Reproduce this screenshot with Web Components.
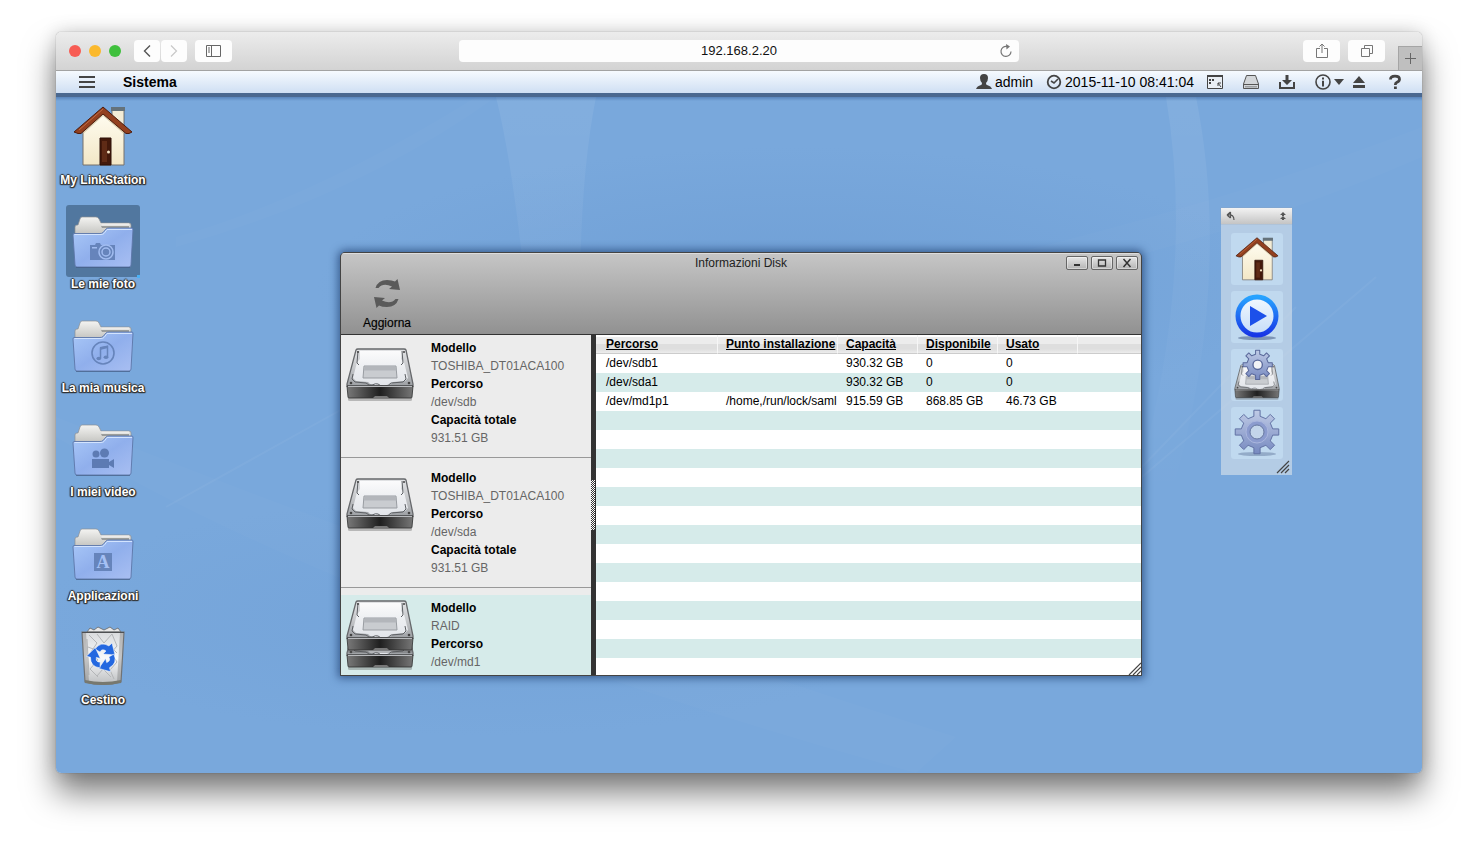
<!DOCTYPE html>
<html lang="it">
<head>
<meta charset="utf-8">
<title>LinkStation</title>
<style>
  html, body { margin: 0; }
  body {
    min-height: 100vh; box-sizing: border-box; padding: 32px 56px 80px;
    display: flex; flex-direction: column;
    background: #fff; color: #000;
    font: 12px/18px "Liberation Sans", Arial, sans-serif;
  }
</style>
</head>
<body>
<browser-frame address="192.168.2.20">
  <system-bar slot="bar"></system-bar>
  <nas-desktop>
    <desktop-icon slot="icons" icon="house" label="My LinkStation"></desktop-icon>
    <desktop-icon slot="icons" icon="photo" label="Le mie foto" selected></desktop-icon>
    <desktop-icon slot="icons" icon="music" label="La mia musica"></desktop-icon>
    <desktop-icon slot="icons" icon="video" label="I miei video"></desktop-icon>
    <desktop-icon slot="icons" icon="apps" label="Applicazioni"></desktop-icon>
    <desktop-icon slot="icons" icon="trash" label="Cestino"></desktop-icon>
    <app-window heading="Informazioni Disk">
      <disk-item slot="list" model="TOSHIBA_DT01ACA100" path="/dev/sdb" total="931.51 GB"></disk-item>
      <disk-item slot="list" model="TOSHIBA_DT01ACA100" path="/dev/sda" total="931.51 GB"></disk-item>
      <disk-item slot="list" model="RAID" path="/dev/md1" icon="raid" selected></disk-item>
      <partition-table></partition-table>
    </app-window>
    <quick-dock></quick-dock>
  </nas-desktop>
</browser-frame>

<script>
const gear = (cx, cy, n, ro, ri) => {
  const pts = [];
  for (let i = 0; i < n; i++) {
    const a = (i / n) * Math.PI * 2 - Math.PI / 2, s = Math.PI / n;
    for (const [r, o] of [[ri, -0.5], [ro, -0.36], [ro, 0.36], [ri, 0.5]]) {
      pts.push((cx + r * Math.cos(a + o * s)).toFixed(2) + ' ' + (cy + r * Math.sin(a + o * s)).toFixed(2));
    }
  }
  return 'M' + pts.join('L') + 'Z';
};

const grad = (id, ...stops) => `<linearGradient id="${id}" x1="0" y1="0" x2="0" y2="1">` +
  stops.map((c, i) => `<stop offset="${i / (stops.length - 1)}" stop-color="${c}"/>`).join('') + '</linearGradient>';

const folder = glyph => [62, 54, `<defs>${grad('tab', '#f4f4f2', '#bdbdb9')}
  <linearGradient id="front" x1="0" y1="0" x2="1" y2="1"><stop offset="0" stop-color="#a9c8f8"/><stop offset=".5" stop-color="#90afec"/><stop offset="1" stop-color="#a9bff2"/></linearGradient></defs>
  <path d="M3 22V13q0-2 2-2h1l2-6q.5-2 2-2h14q2 0 3 2l2 4h28q2 0 2 2v12H3z" fill="url(#tab)" stroke="#8c8f93" stroke-width=".7"/>
  <path d="M29 12h28v2H30z" fill="#9b9d9b"/><path d="M29 9.500h28v2H30z" fill="#ececea"/>
  <path d="M1 21q0-1.500 1-1.500h26q2 0 3-1l3-3.500q1-1 3-1h23q1 0 1 1.500L59 51q0 2-2 2H5q-2 0-2-2z" fill="url(#front)" stroke="#5c76a8" stroke-width=".9"/>
  <path d="M2.500 20.500H29q2 0 3-1l3-4h25" fill="none" stroke="#d3e4ff" stroke-width="1"/>
  <path d="M4 53.500h54" stroke="#41597f" stroke-width="1" opacity=".6"/><g transform="translate(0 1)">${glyph}</g>`];

const disk = dy => `<g transform="translate(0 ${dy})">
  <path d="M2 50h64v2q0 1-2 1H4q-2 0-2-1z" fill="#555" opacity=".35"/>
  <path d="M10 2q.5-1 2-1h46q1.500 0 2 1l7 34v2H1v-2z" fill="url(#case)" stroke="#66686b" stroke-width="1.300"/>
  <path d="M14 3h42l-1 8 3 3 4 16-3 3-12 1q-2 3-5 3H27q-3 0-5-3l-12-1-3-3 4-16 3-3z" fill="url(#plate)"/>
  <path d="M12 3l-1 12 2 2M7 26l-1 5 3 3 11 1q3 3 6 2 4-2 6-1 2 2 6 2 5 0 7-3l12-1 3-3-1-5M56 3l1 12-2 2" fill="none" stroke="#5d6064" stroke-width="1"/>
  <path d="M18 18h32l1 12H17z" fill="#c9ccd0" stroke="#999da2" stroke-width="1"/>
  <path d="M18.500 18.500h31l1 4H18z" fill="#b3b6bb"/>
  <circle cx="12" cy="4" r="1" fill="#444"/><circle cx="58" cy="4" r="1" fill="#444"/><circle cx="5" cy="35" r="1.300" fill="#444"/><circle cx="63" cy="35" r="1.300" fill="#444"/>
  <path d="M1 38h66l-1 11q0 1-1 1H3q-1 0-1-1z" fill="url(#edge)" stroke="#2d2e2f" stroke-width=".8"/>
  <path d="M2 38.500h64" stroke="#b8babd" stroke-width="1"/>
  <path d="M27 50l2-2h12l2 2z" fill="#777"/></g>`;
const diskDefs = `<defs>${grad('case', '#e2e3e5', '#c7c9cc', '#9da0a4')}${grad('plate', '#fbfbfc', '#eceef1', '#e2e5ea')}
  <linearGradient id="edge" x1="0" y1="0" x2="1" y2="0"><stop offset="0" stop-color="#7a7a7a"/><stop offset=".5" stop-color="#1f1f1f"/><stop offset="1" stop-color="#777"/></linearGradient></defs>`;
const gearDefs = `<defs><linearGradient id="gear" x1="0" y1="0" x2="0" y2="1"><stop offset="0" stop-color="#c0cbe6"/><stop offset="1" stop-color="#7689c0"/></linearGradient></defs>`;

const dark = '#444';
const arrow = 'M2.500 9Q5 1 14 1q5 0 8 1.500L24.500 0 27 11 16 10l3-2.500q-9-4-13.500 1.500z';
const recycle = 'M22 22q6-8 14-3l3-3 3 12-12-1 3-3q-4-3-6 1z';
const ICONS = {
  house: [60, 62, `<defs>${grad('wall', '#fffdf2', '#f3e7c6')}</defs>
    <path d="M39 2h12v20l-12-8z" fill="#f3ecd6" stroke="#555" stroke-width=".8"/><path d="M38 1h14v4H38z" fill="#65727a"/>
    <path d="M10 22L30 5l21 17v37H10z" fill="url(#wall)" stroke="#76706a" stroke-width="1"/>
    <path d="M10 24L30 7l21 17v4L30 10 10 28z" fill="#cdbd9a" opacity=".7"/>
    <path d="M30 1l29 25-3 1.500h-3L30 8 8 27.500H5L1 26z" fill="#93401f" stroke="#4d1c0d" stroke-width="1"/>
    <path d="M30 3L6 24" stroke="#c06b43" stroke-width="1"/>
    <path d="M27 32h11v27H27z" fill="#43190b" stroke="#2c1008"/><path d="M29 35h5v21h-5z" fill="#5f2b16"/><circle cx="35.500" cy="46" r="1.500" fill="#f7e8c8"/>`],
  photo: folder('<path d="M18 30h5l1-2h4l1 2h14v15H18z" fill="#6684bb"/><circle cx="34" cy="37" r="7" fill="#6684bb" stroke="#a1bcf0" stroke-width="1.500"/><circle cx="34" cy="37" r="4" fill="none" stroke="#a1bcf0" stroke-width="1.500"/><path d="M20 32h5v1.500h-5z" fill="#a1bcf0"/>'),
  music: folder('<g fill="none" stroke="#6684bb"><circle cx="31" cy="34" r="11" stroke-width="1.600"/><path d="M28.500 39V29l7-1.500V38" stroke-width="1.500"/></g><path d="M28 28l8-1.500v2.500L28 31z" fill="#6684bb"/><ellipse cx="26.800" cy="39.500" rx="2.400" ry="1.800" fill="#6684bb"/><ellipse cx="34" cy="38.300" rx="2.400" ry="1.800" fill="#6684bb"/>'),
  video: folder('<g fill="#5d7bb3"><circle cx="24" cy="31" r="3.500"/><circle cx="32.500" cy="30" r="4.500"/><path d="M20 36h17v3l5-3v9l-5-3v3H20z"/></g>'),
  apps: folder('<path d="M22 26h18v18H22z" fill="#6684bb"/><text x="31" y="41" text-anchor="middle" font-family="Liberation Serif, serif" font-size="18" font-weight="bold" fill="#a5c0f4">A</text>'),
  trash: [60, 60, `<defs>${grad('bin', '#d9dbdd', '#f8f9fa', '#bcbec0')}</defs>
    <path d="M14 5l3-4 4 2 4-3 6 3 6-3 4 3 4-2 3 4z" fill="#e8e8e8" stroke="#666" stroke-width=".8"/>
    <path d="M9 5h42l-3 50q-18 5-36 0z" fill="url(#bin)" stroke="#6f7275" stroke-width="1.200"/>
    <path d="M16 8l8 8-6 9 7 8-8 9 8 8M24 7l7 9 8-9 5 12-6 7 6 9-7 8 4 9M15 20l8 3M36 18l8 8M24 49l6-7 8 8M14 12l2 36" fill="none" stroke="#b4b6b8" stroke-width="1"/>
    <path d="M9 5h4l3 50h-4zM47 5h4l-3 50h-4z" fill="#777" opacity=".4"/>
    <path d="M12 53q18 4 36 0v3q-18 4-36 0z" fill="#77786f"/><path d="M9 5.500h42" stroke="#4e5052" stroke-width="1.200"/>
    <g fill="#2468e0" stroke="#fff" stroke-width=".5">${[0, 120, 240].map(a => `<path d="${recycle}" transform="rotate(${a} 30 30)"/>`).join('')}</g>`],
  disk: [68, 54, diskDefs + disk(0)],
  raid: [68, 70, diskDefs + disk(17) + disk(0)],
  diskgear: [68, 76, diskDefs + gearDefs + disk(21) + `<path d="${gear(35, 22, 8, 22, 16)}" fill="url(#gear)" stroke="#59689a" stroke-width="1.500" stroke-linejoin="round"/><circle cx="35" cy="22" r="7" fill="#f2f3f6" stroke="#59689a" stroke-width="2"/>`],
  gear: [46, 48, gearDefs + `<ellipse cx="23" cy="45" rx="19" ry="2" fill="#50678e" opacity=".4"/><path d="${gear(23, 23, 8, 22, 16)}" fill="url(#gear)" stroke="#6272a4" stroke-width="1" stroke-linejoin="round"/><circle cx="23" cy="23" r="11" fill="#8b9bce" stroke="#aab6de"/><circle cx="23" cy="23" r="7" fill="#c3d5ea" stroke="#66769f"/>`],
  play: [46, 48, `<defs>${grad('ring', '#27a3ff', '#1736e6')}${grad('disc', '#f2f9ff', '#c5dcf8')}</defs><ellipse cx="23" cy="45" rx="19" ry="2" fill="#50678e" opacity=".6"/><circle cx="23" cy="23" r="19" fill="url(#disc)" stroke="url(#ring)" stroke-width="5"/><path d="M16 13l17 10-17 10z" fill="#1c50ea"/>`],
  refresh: [28, 30, `<g fill="#5a5a5a"><path d="${arrow}"/><path d="${arrow}" transform="rotate(180 14 14.500)"/></g>`],
  user: [16, 16, `<path d="M8 0q4 0 4 4 0 3-2 5 0 2 1 2 4 1 5 4H0q1-3 5-4 1 0 1-2-2-2-2-5 0-4 4-4z" fill="${dark}"/>`],
  clock: [16, 16, `<circle cx="8" cy="8" r="6.300" fill="none" stroke="${dark}" stroke-width="1.800"/><path d="M5 7l3 2 4-4" fill="none" stroke="${dark}" stroke-width="1.600"/>`],
  widget: [16, 14, `<path d="M.5.5h15v13H.5z" fill="#e9eef4" stroke="${dark}"/><path d="M0 0h16v2H0z" fill="${dark}"/><path d="M2 4h2v2H2zM5 4h2v2H5zM2 7h2v2H2z" fill="${dark}"/><path d="M11 8v3M11 8h3M11 8l3 4" stroke="${dark}" stroke-width="1"/>`],
  drive: [16, 14, `<path d="M3.500.5h9L15.500 9v4.500H.5V9z" fill="#d3d6d9" stroke="#555"/><path d="M1 9.500h14" stroke="#555"/><path d="M2 11h12v1.500H2z" fill="#9da0a3"/>`],
  download: [16, 14, `<path d="M6.500 0h3v5H13L8 10 3 5h3.500z" fill="${dark}"/><path d="M1 7v6h14V7" fill="none" stroke="${dark}" stroke-width="2"/>`],
  info: [16, 16, `<circle cx="8" cy="8" r="7" fill="none" stroke="${dark}" stroke-width="1.600"/><path d="M7 3.500h2v2H7zM7 6.800h2V12.500H7z" fill="${dark}"/>`],
  caret: [10, 6, `<path d="M0 0h10L5 6z" fill="${dark}"/>`],
  eject: [12, 12, `<path d="M6 0l6 7H0zM0 9h12v3H0z" fill="${dark}"/>`],
  help: [12, 14, `<path d="M1.500 4.500Q1.500 1.200 6 1.200t4.500 3Q10.500 6 8 7.200 6.300 8 6.300 10" fill="none" stroke="${dark}" stroke-width="2.800"/><path d="M5 11.500h2.800V14H5z" fill="${dark}"/>`],
  menu: [16, 12, `<path d="M0 1h16M0 6h16M0 11h16" stroke="${dark}" stroke-width="2"/>`],
  back: [8, 12, `<path d="M7 .5L1.500 6 7 11.500" fill="none" stroke="#555" stroke-width="1.400"/>`],
  fwd: [8, 12, `<path d="M1 .5L6.500 6 1 11.500" fill="none" stroke="#c8c8c8" stroke-width="1.200"/>`],
  sidebar: [15, 12, `<path d="M.5.5h14v11H.5zM5.500.5v11M2 3h2M2 5h2M2 7h2" fill="none" stroke="#666"/>`],
  reload: [12, 14, `<path d="M7 2.500A5 5 0 1 0 11 7.500" fill="none" stroke="#777" stroke-width="1.200"/><path d="M6 0l4 2.500L6.500 5.500z" fill="#777"/>`],
  share: [12, 16, `<path d="M4 5.500H.5v9h11v-9H8M6 10V1M3.500 3.500L6 1l2.500 2.500" fill="none" stroke="#777"/>`],
  tabs: [12, 12, `<path d="M.5 3.500h8v8h-8zM3.500 3V.5h8v8H9" fill="none" stroke="#777"/>`],
  plus: [11, 11, `<path d="M5.500 0v11M0 5.500h11" stroke="#666"/>`],
  undo: [8, 8, `<path d="M3.500 0v6M0 3l3.500-3M0 3l3.500 3M1 3q6-1 6 5" fill="none" stroke="#555" stroke-width="1.200"/>`],
  up2: [6, 8, `<path d="M3 0l3 3H0zM2 3h2v1H2zM3 4l3 3H0zM2 7h2v1H2z" fill="#555"/>`],
  min: [10, 8, `<path d="M2 6h6" stroke="#333" stroke-width="2"/>`],
  max: [10, 8, `<path d="M1.500 1h7v6h-7z" fill="none" stroke="#333" stroke-width="1.300"/>`],
  close: [10, 8, `<path d="M1.500 0l7 8M8.500 0l-7 8" stroke="#333" stroke-width="1.500"/>`],
  grip: [12, 12, `<path d="M0 12L12 0M4 12l8-8M8 12l4-4" stroke="#444" stroke-width="1.200"/>`],
};

class Base extends HTMLElement {
  connectedCallback() {
    if (this.shadowRoot) return;
    this.attachShadow({ mode: 'open' }).innerHTML = `<style>
      button { all: unset; box-sizing: border-box; cursor: default; }
      button:focus-visible { outline: 1px solid #06c; }
    </style>` + this.render();
  }
  at(n, d = '') { return this.getAttribute(n) || d; }
}

customElements.define('ui-icon', class extends Base {
  render() {
    const [w, h, body] = ICONS[this.at('name')];
    const k = Number(this.at('width', w)) / w;
    return `<style>:host { display: block; flex: none; } svg { display: block; overflow: visible; }</style>
      <svg width="${Math.round(w * k)}" height="${Math.round(h * k)}" viewBox="0 0 ${w} ${h}" aria-hidden="true">${body}</svg>`;
  }
});

customElements.define('browser-frame', class extends Base {
  render() {
    return `<style>
      :host { display: flex; flex-direction: column; flex: 1; border-radius: 5px;
        box-shadow: 0 0 1px rgba(0,0,0,.5), 0 0 18px rgba(0,0,0,.16), 0 20px 32px rgba(0,0,0,.5); }
      header { display: grid; grid-template-columns: 1fr minmax(200px, 560px) 1fr; align-items: center; height: 38px;
        border-bottom: 1px solid #a2a2a2; border-radius: 5px 5px 0 0; background: linear-gradient(#ececec, #d3d3d3); }
      .left, .right { display: flex; align-items: center; }
      .left { padding-left: 13px; gap: 8px; }
      .right { justify-content: flex-end; gap: 8px; height: 100%; }
      i { width: 12px; height: 12px; border-radius: 50%; }
      .nav { display: flex; gap: 1px; margin-left: 5px; }
      .b { display: flex; align-items: center; justify-content: center; height: 22px; width: 37px; border-radius: 4px; background: #fdfdfd; }
      .nav .b { width: 26px; }
      .addr { display: grid; grid-template-columns: 20px 1fr 20px; align-items: center; height: 22px; border-radius: 4px; background: #fdfdfd; }
      .addr button { justify-self: center; margin-right: 6px; }
      input { grid-column: 2; min-width: 0; border: 0; background: none; padding: 0; text-align: center; font: 13px/22px "Liberation Sans", sans-serif; color: #111; outline: 0; }
      .plus { align-self: flex-end; display: flex; align-items: center; justify-content: center; width: 24px; height: 24px; margin-left: 5px; border: 1px solid #a5a5a5; border-width: 1px 0 0 1px; background: #bfbfbf; }
      main { flex: 1; display: flex; flex-direction: column; }
    </style>
    <header>
      <div class="left"><i style="background:#f75c54"></i><i style="background:#fbb92d"></i><i style="background:#3fc03d"></i>
        <div class="nav"><button class="b" aria-label="Indietro"><ui-icon name="back"></ui-icon></button><button class="b" aria-label="Avanti"><ui-icon name="fwd"></ui-icon></button></div>
        <button class="b" aria-label="Barra laterale"><ui-icon name="sidebar"></ui-icon></button></div>
      <div class="addr"><input type="text" aria-label="Indirizzo" value="${this.at('address')}"><button aria-label="Ricarica"><ui-icon name="reload"></ui-icon></button></div>
      <div class="right"><button class="b" aria-label="Condividi"><ui-icon name="share"></ui-icon></button><button class="b" aria-label="Pannelli"><ui-icon name="tabs"></ui-icon></button>
        <button class="plus" aria-label="Nuovo pannello"><ui-icon name="plus"></ui-icon></button></div>
    </header>
    <slot name="bar"></slot><main><slot></slot></main>`;
  }
});

customElements.define('system-bar', class extends Base {
  render() {
    const b = (n, l) => `<button aria-label="${l}"><ui-icon name="${n}"></ui-icon></button>`;
    return `<style>
      :host { display: flex; align-items: center; height: 22px; padding: 0 19px 0 23px; font-size: 14px; line-height: 22px;
        background: linear-gradient(#f6fafe, #cfdff3); border-bottom: 4px solid #4a6890; }
      button { display: flex; align-items: center; justify-content: center; min-width: 16px; height: 22px; }
      strong { margin-left: 28px; flex: 1; }
      .user, .time, .tools, .pair { display: flex; align-items: center; }
      .user, .time { gap: 3px; } .time { margin: 0 13px; }
      .tools { gap: 20px; } .pair { gap: 7px; } .drop { gap: 3px; }
    </style>
    ${b('menu', 'Menu')}<strong>Sistema</strong>
    <button class="user"><ui-icon name="user"></ui-icon>admin</button>
    <div class="time"><ui-icon name="clock"></ui-icon><time>2015-11-10 08:41:04</time></div>
    <div class="tools">${b('widget', 'Widget')}${b('drive', 'Dischi')}${b('download', 'Download')}
      <div class="pair"><button class="drop" aria-label="Informazioni"><ui-icon name="info"></ui-icon><ui-icon name="caret"></ui-icon></button>${b('eject', 'Espelli')}</div>${b('help', 'Aiuto')}</div>`;
  }
});

customElements.define('nas-desktop', class extends Base {
  render() {
    return `<style>
      :host { display: block; flex: 1; position: relative; overflow: hidden; border-radius: 0 0 5px 5px; background: #79a8dc; }
      .wall { position: absolute; inset: 0; width: 100%; height: 100%; }
      nav { position: relative; display: flex; flex-direction: column; gap: 18px; width: 94px; padding: 4px 0 60px; }
      .shade { position: absolute; inset: 0 0 auto; height: 4px; background: linear-gradient(rgba(40,80,140,.4), transparent); }
    </style>
    <svg class="wall" viewBox="0 0 1366 676" preserveAspectRatio="none" aria-hidden="true">
      <defs><radialGradient id="d"><stop offset="0" stop-color="#6d9dd4"/><stop offset="1" stop-color="#6d9dd4" stop-opacity="0"/></radialGradient>
      <linearGradient id="l" x1="0" x2="0" y1="0" y2="1"><stop offset="0" stop-color="#fff" stop-opacity=".07"/><stop offset=".6" stop-color="#fff" stop-opacity="0"/></linearGradient></defs>
      <ellipse cx="740" cy="190" rx="480" ry="140" fill="url(#d)" opacity=".8"/><ellipse cx="420" cy="520" rx="440" ry="120" fill="url(#d)" opacity=".4"/>
      <path d="M440 0Q480 160 500 676H560Q500 200 540 0z" fill="url(#l)"/>
      <path d="M120 140Q260 100 420 0H440Q300 100 120 150z" fill="#fff" opacity=".02"/>
      <path d="M1110 0Q1160 300 960 676H1000Q1200 300 1140 0z" fill="url(#l)"/>
      <path d="M900 170Q1160 110 1366 30V60Q1160 150 900 200z" fill="#fff" opacity=".02"/>
      <path d="M0 320Q400 480 900 640L860 676Q300 520 0 340z" fill="#fff" opacity=".02"/>
      <path d="M1086 380L1320 180M1086 370L1240 210M110 410L290 310" stroke="#fff" stroke-width="2" opacity=".04"/>
    </svg>
    <div class="shade"></div>
    <nav><slot name="icons"></slot></nav><slot></slot>`;
  }
});

customElements.define('desktop-icon', class extends Base {
  render() {
    return `<style>
      :host { display: block; }
      button { display: flex; flex-direction: column; align-items: center; width: 100%; }
      .tile { position: relative; display: flex; align-items: center; justify-content: center; width: 74px; height: 72px; border-radius: 3px; }
      :host([selected]) .tile { background: #51779f; }
      :host([selected]) .tile::after { content: ""; position: absolute; right: 0; bottom: -1px; width: 3px; height: 3px; background: #4bb1f5; }
      span { position: relative; color: #fff; font-weight: bold; line-height: 14px; white-space: nowrap;
        text-shadow: 1px 0 1px #333, -1px 0 1px #333, 0 1px 1px #333, 0 -1px 1px #333, 1px 1px 1px #333, -1px 1px 1px #444; }
    </style>
    <button><div class="tile"><ui-icon name="${this.at('icon')}"></ui-icon></div><span>${this.at('label')}</span></button>`;
  }
});

customElements.define('app-window', class extends Base {
  render() {
    const b = (n, l) => `<button class="w" aria-label="${l}"><ui-icon name="${n}"></ui-icon></button>`;
    return `<style>
      :host { position: absolute; left: 284px; top: 155px; width: 802px; height: 424px; box-sizing: border-box; display: flex; flex-direction: column;
        border: 1px solid #444; border-radius: 5px 5px 0 0; box-shadow: 0 0 8px 2px rgba(20,50,100,.65); overflow: hidden; background: #333; }
      header { background: linear-gradient(#c6c6c6, #919191); border-bottom: 1px solid #333; box-shadow: inset 0 1px #ddd; }
      .title { display: grid; grid-template-columns: 1fr auto 1fr; align-items: center; height: 20px; color: #222; }
      .btns { grid-column: 3; display: flex; gap: 3px; justify-content: flex-end; padding-right: 3px; }
      h1 { grid-column: 2; margin: 0; font-size: 12px; font-weight: normal; line-height: 20px; }
      .w { display: flex; align-items: center; justify-content: center; width: 22px; height: 14px; border: 1px solid #666; border-radius: 2px; background: linear-gradient(#e6e6e6, #b4b4b4); box-shadow: inset 0 0 0 1px rgba(255,255,255,.4); }
      .tools { height: 61px; padding-left: 20px; }
      .tool { display: flex; flex-direction: column; align-items: center; gap: 5px; width: 52px; padding-top: 6px; }
      .tool span { text-shadow: 0 0 1px rgba(0,0,0,.3); }
      .panes { flex: 1; min-height: 0; display: grid; grid-template-columns: 250px 5px 1fr; }
      .list { overflow: hidden; display: flex; flex-direction: column; gap: 7px; background: #ececec; }
      .split { display: flex; align-items: center; background: #333; }
      .split::before { content: ""; width: 4px; height: 50px; background: conic-gradient(#fff 25%, #333 0 50%, #fff 0 75%, #333 0) 0 0 / 2px 2px; }
      .grip { position: absolute; right: 0; bottom: 0; }
    </style>
    <header><div class="title"><h1>${this.at('heading')}</h1><div class="btns">${b('min', 'Riduci')}${b('max', 'Ingrandisci')}${b('close', 'Chiudi')}</div></div>
      <div class="tools"><button class="tool"><ui-icon name="refresh"></ui-icon><span>Aggiorna</span></button></div></header>
    <div class="panes"><div class="list"><slot name="list"></slot></div><div class="split"></div><slot></slot></div>
    <ui-icon class="grip" name="grip"></ui-icon>`;
  }
});

customElements.define('disk-item', class extends Base {
  render() {
    const total = this.at('total');
    return `<style>
      :host { flex: none; display: flex; gap: 17px; padding: 4px 5px 10px; border-bottom: 1px solid #999; }
      :host([selected]) { flex: 1 0 auto; background: #d6ebea; padding-bottom: 3px; border: 0; }
      .pic { display: flex; align-items: center; height: 72px; }
      dl, dd { margin: 0; } dt { font-weight: bold; } dd { color: #666; }
    </style>
    <div class="pic"><ui-icon name="${this.at('icon', 'disk')}"></ui-icon></div>
    <dl><dt>Modello</dt><dd>${this.at('model')}</dd><dt>Percorso</dt><dd>${this.at('path')}</dd>${total ? `<dt>Capacità totale</dt><dd>${total}</dd>` : ''}</dl>`;
  }
});

customElements.define('partition-table', class extends Base {
  render() {
    const rows = [
      ['/dev/sdb1', '', '930.32 GB', '0', '0'],
      ['/dev/sda1', '', '930.32 GB', '0', '0'],
      ['/dev/md1p1', '/home,/run/lock/saml', '915.59 GB', '868.85 GB', '46.73 GB'],
    ];
    return `<style>
      :host { display: block; min-width: 0; background: repeating-linear-gradient(#d6ebea 0 19px, #fff 19px 38px); }
      table { width: 100%; table-layout: fixed; border-collapse: separate; border-spacing: 0; line-height: 19px; }
      col { width: 80px; } .a { width: 122px; } .b { width: 120px; } .z { width: auto; }
      th { height: 18px; line-height: 17px; padding: 0 1px 0 8px; text-align: left; text-decoration: underline; white-space: nowrap;
        border-bottom: 1px solid #ccc; border-right: 1px solid #f6f6f6; background: linear-gradient(#fff 0 2px, #ececec 2px 9px, #dedede 9px 14px, #ececec); }
      td { height: 19px; padding: 0 0 0 8px; white-space: nowrap; }
      th:first-child, td:first-child { padding-left: 10px; } th:last-child { border-right: 0; }
    </style>
    <table><colgroup><col class="a"><col class="b"><col><col><col><col class="z"></colgroup>
      <thead><tr><th>Percorso</th><th>Punto installazione</th><th>Capacità</th><th>Disponibile</th><th>Usato</th><th></th></tr></thead>
      <tbody>${rows.map(r => `<tr>${r.map(c => `<td>${c}</td>`).join('')}<td></td></tr>`).join('')}</tbody></table>`;
  }
});

customElements.define('quick-dock', class extends Base {
  render() {
    const b = (n, l, w) => `<button aria-label="${l}"><ui-icon name="${n}" width="${w}"></ui-icon></button>`;
    return `<style>
      :host { position: absolute; top: 111px; right: 130px; width: 71px; background: rgba(220,228,235,.6); }
      header { display: flex; align-items: center; justify-content: space-between; height: 16px; padding: 0 6px; background: linear-gradient(#f3f3f3, #c4c4c4); box-shadow: 0 0 1px #999; }
      .items { display: flex; flex-direction: column; align-items: center; gap: 6px; padding: 9px 0 16px; }
      .items button { display: flex; align-items: center; justify-content: center; width: 52px; height: 52px; border-radius: 3px; background: rgba(200,225,245,.6); }
      .grip { position: absolute; right: 3px; bottom: 2px; }
    </style>
    <header><button aria-label="Ripristina"><ui-icon name="undo"></ui-icon></button><button aria-label="Comprimi"><ui-icon name="up2"></ui-icon></button></header>
    <div class="items">${b('house', 'My LinkStation', 44)}${b('play', 'Media', 46)}${b('diskgear', 'Dischi', 46)}${b('gear', 'Impostazioni', 46)}</div>
    <ui-icon class="grip" name="grip"></ui-icon>`;
  }
});
</script>
</body>
</html>
